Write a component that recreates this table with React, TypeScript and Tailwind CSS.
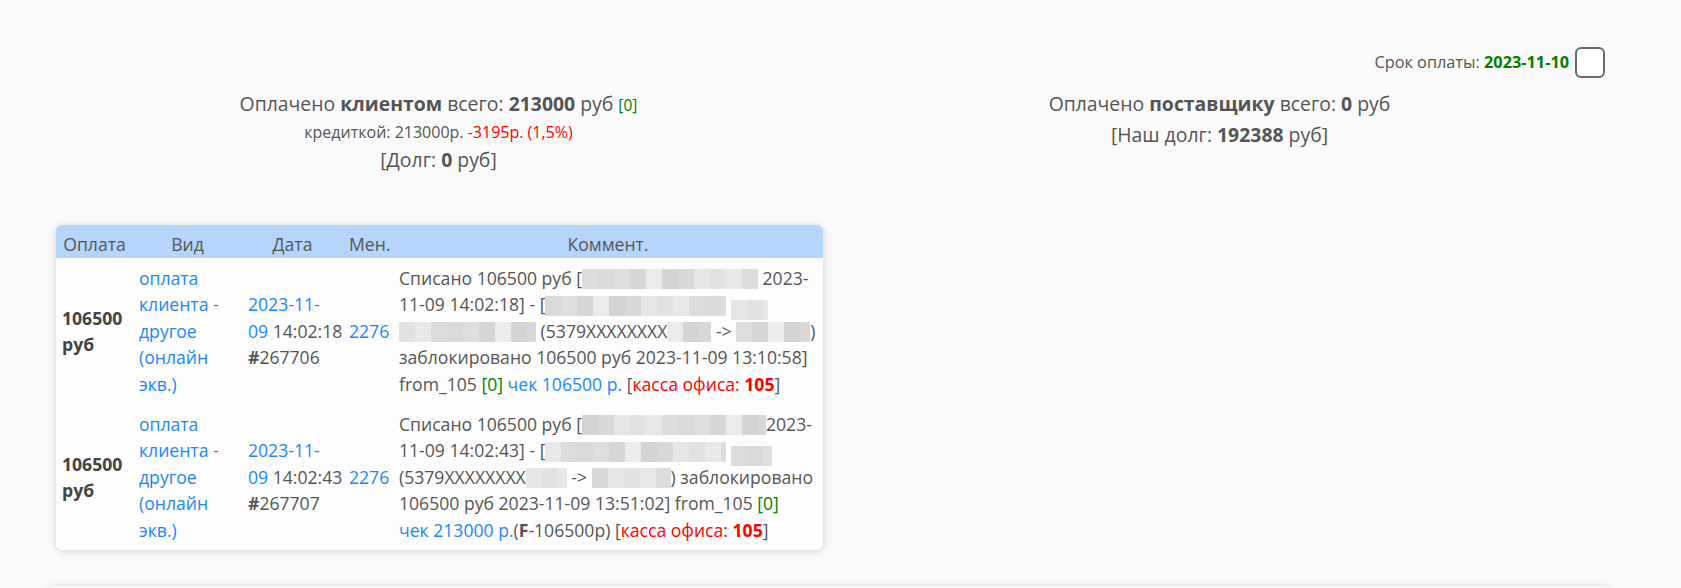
import React from 'react';

const font = { fontFamily: '"Segoe UI", "Open Sans", "Noto Sans", sans-serif' };

const shades = ['#d6d6d6', '#dcdcdc', '#e6e6e6', '#ebebeb', '#d9d9d9', '#e2e2e2', '#d3d3d3', '#dedede', '#e8e8e8', '#d8d8d8'];

// pixelated grey block standing in for hidden text
const Blur: React.FC<{ w: number; seed?: number; low?: boolean }> = ({ w, seed = 0, low }) => {
  const cells = Math.ceil(w / 16);
  return (
    <span
      className={`inline-flex h-[20px] overflow-hidden align-middle ${low ? 'translate-y-[3px]' : '-translate-y-[1px]'}`}
      style={{ width: w }}
    >
      {Array.from({ length: cells }).map((_, i) => (
        <span
          key={i}
          className="h-full w-[16px] shrink-0"
          style={{ backgroundColor: shades[(i * 3 + seed) % shades.length] }}
        />
      ))}
    </span>
  );
};

const Blue: React.FC<{ children: React.ReactNode }> = ({ children }) => (
  <span className="text-[#1a87ff]">{children}</span>
);

const Line: React.FC<{ children: React.ReactNode }> = ({ children }) => (
  <div className="whitespace-nowrap">{children}</div>
);

const Green0 = () => <span className="text-[#008000]">[0]</span>;

const Kassa = () => (
  <>
    [<span className="text-[#ff0000]">касса офиса: <b>105</b></span>]
  </>
);

interface Payment {
  date: string;
  time: string;
  num: string;
  comment: React.ReactNode;
}

const payments: Payment[] = [
  {
    date: '2023-11-',
    time: '14:02:18',
    num: '267706',
    comment: (
      <>
        <Line>
          Списано 106500 руб [<Blur w={176} seed={1} /> 2023-
        </Line>
        <Line>
          11-09 14:02:18] - [<Blur w={181} seed={4} /> <Blur w={37} seed={2} low />
        </Line>
        <Line>
          <Blur w={137} seed={5} /> (5379XXXXXXXX<Blur w={44} seed={3} /> -&gt; <Blur w={74} seed={7} />)
        </Line>
        <Line>заблокировано 106500 руб 2023-11-09 13:10:58]</Line>
        <Line>
          from_105 <Green0 /> <Blue>чек 106500 р.</Blue> <Kassa />
        </Line>
      </>
    ),
  },
  {
    date: '2023-11-',
    time: '14:02:43',
    num: '267707',
    comment: (
      <>
        <Line>
          Списано 106500 руб [<Blur w={184} seed={6} />2023-
        </Line>
        <Line>
          11-09 14:02:43] - [<Blur w={181} seed={8} /> <Blur w={41} seed={1} low />
        </Line>
        <Line>
          (5379XXXXXXXX<Blur w={41} seed={2} /> -&gt; <Blur w={79} seed={9} />) заблокировано
        </Line>
        <Line>
          106500 руб 2023-11-09 13:51:02] from_105 <Green0 />
        </Line>
        <Line>
          <Blue>чек 213000 р.</Blue>(<b>F</b>-106500р) <Kassa />
        </Line>
      </>
    ),
  },
];

export default function App() {
  return (
    <div className="min-h-screen bg-[#fafafa] text-[#555] text-[17.6px] leading-[26.4px]" style={font}>
      <div className="ml-[48px] w-[1562px] pt-[47px]">
        <div className="grid grid-cols-[781px_781px]">
          {/* left column */}
          <div className="flex flex-col">
            <div className="mt-[42px] flex flex-col items-center text-[19.4px] leading-[29px]">
              <div>
                Оплачено <b>клиентом</b> всего: <b>213000</b> руб{' '}
                <span className="text-[15.5px] text-[#008000]">[0]</span>
              </div>
              <div className="text-[16px] leading-[24px]">
                кредиткой: 213000р. <span className="text-[#ff0000]">-3195р. (1,5%)</span>
              </div>
              <div className="mt-[1px]">
                [Долг: <b>0</b> руб]
              </div>
            </div>

            <div className="mt-[51px] ml-[8px] w-[767px] overflow-hidden rounded-[6px] bg-[#fdfdfd] shadow-[0_1px_8px_rgba(0,0,0,0.16)]">
              <table className="w-full table-fixed border-collapse">
                <colgroup>
                  <col className="w-[77px]" />
                  <col className="w-[109px]" />
                  <col className="w-[101px]" />
                  <col className="w-[50px]" />
                  <col />
                </colgroup>
                <thead>
                  <tr className="h-[33px] bg-[#b5d5fd]">
                    {['Оплата', 'Вид', 'Дата', 'Мен.', 'Коммент.'].map((h) => (
                      <th key={h} className="px-[6px] pt-[6px] pb-0 text-center font-normal align-top">
                        {h}
                      </th>
                    ))}
                  </tr>
                </thead>
                <tbody>
                  {payments.map((p) => (
                    <tr key={p.num}>
                      <td className="px-[6px] py-[7px] align-middle font-bold text-[#444]">
                        <div>106500</div>
                        <div>руб</div>
                      </td>
                      <td className="px-[6px] py-[7px] align-middle text-[#1a87ff]">
                        <Line>оплата</Line>
                        <Line>клиента -</Line>
                        <Line>другое</Line>
                        <Line>(онлайн</Line>
                        <Line>экв.)</Line>
                      </td>
                      <td className="px-[6px] py-[7px] align-middle">
                        <Line>
                          <Blue>{p.date}</Blue>
                        </Line>
                        <Line>
                          <Blue>09</Blue> {p.time}
                        </Line>
                        <Line>
                          <b>#</b>
                          {p.num}
                        </Line>
                      </td>
                      <td className="px-[6px] py-[7px] align-middle">
                        <Blue>2276</Blue>
                      </td>
                      <td className="px-[6px] py-[7px] align-middle">{p.comment}</td>
                    </tr>
                  ))}
                </tbody>
              </table>
            </div>
          </div>

          {/* right column */}
          <div className="flex flex-col">
            <div className="flex items-center justify-end gap-[6px] pr-[5px]">
              <span className="text-[16.3px]">
                Срок оплаты: <b className="text-[#008000]">2023-11-10</b>
              </span>
              <span className="h-[31px] w-[30px] rounded-[6px] border-2 border-[#6b6b6b] bg-white" />
            </div>
            <div className="mt-[11px] flex flex-col items-center text-[19.4px] leading-[29px]">
              <div>
                Оплачено <b>поставщику</b> всего: <b>0</b> руб
              </div>
              <div className="mt-[2px]">
                [Наш долг: <b>192388</b> руб]
              </div>
            </div>
          </div>
        </div>

        <div className="mt-[36px] h-[80px] w-[1562px] rounded-[6px] bg-[#fafafa] shadow-[0_0_8px_rgba(0,0,0,0.12)]" />
      </div>
    </div>
  );
}
